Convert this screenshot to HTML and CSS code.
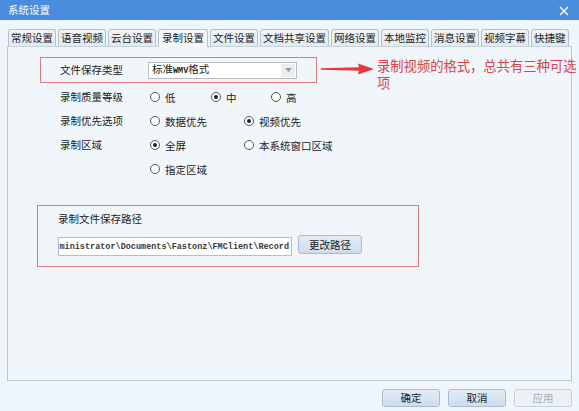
FILE: index.html
```html
<!DOCTYPE html>
<html lang="zh-CN">
<head>
<meta charset="utf-8">
<link rel="stylesheet" href="styles.css">
</head>
<body>
<div class="window">
  <div class="titlebar">
    <span class="title">系统设置</span>
    <svg class="close" width="10" height="10" viewBox="0 0 10 10"><path d="M1 1L9 9M9 1L1 9" stroke="#fff" stroke-width="1.4"/></svg>
  </div>
  <div class="body">
    <div class="tabs">
      <div class="tab">常规设置</div>
      <div class="tab">语音视频</div>
      <div class="tab">云台设置</div>
      <div class="tab active">录制设置</div>
      <div class="tab">文件设置</div>
      <div class="tab">文档共享设置</div>
      <div class="tab">网络设置</div>
      <div class="tab">本地监控</div>
      <div class="tab">消息设置</div>
      <div class="tab">视频字幕</div>
      <div class="tab">快捷键</div>
    </div>
    <div class="panel">
      <div class="hl-box type-box">
        <span class="label">文件保存类型</span>
        <div class="select"><span class="select-text">标准<b class="mono">WMV</b>格式</span><span class="select-arrow"><svg width="7" height="4" viewBox="0 0 7 4"><path d="M0 0H7L3.5 4Z" fill="#999"/></svg></span></div>
      </div>
      <div class="annotation">
        <svg class="arrow" width="53" height="12" viewBox="0 0 53 12"><path d="M0 5.3L38 4.2L37 0.5L53 6L37 11.5L38 7.8L0 6.7Z" fill="#e8383d"/></svg>
        <p class="note">录制视频的格式，总共有三种可选项</p>
      </div>
      <div class="row">
        <span class="label">录制质量等级</span>
        <span class="radio w61"><i class="dot"></i>低</span>
        <span class="radio w60"><i class="dot on"></i>中</span>
        <span class="radio"><i class="dot"></i>高</span>
      </div>
      <div class="row">
        <span class="label">录制优先选项</span>
        <span class="radio w94"><i class="dot"></i>数据优先</span>
        <span class="radio"><i class="dot on"></i>视频优先</span>
      </div>
      <div class="row">
        <span class="label">录制区域</span>
        <span class="radio w94"><i class="dot on"></i>全屏</span>
        <span class="radio"><i class="dot"></i>本系统窗口区域</span>
      </div>
      <div class="row">
        <span class="label"></span>
        <span class="radio"><i class="dot"></i>指定区域</span>
      </div>
      <div class="hl-box path-box">
        <div class="path-label">录制文件保存路径</div>
        <div class="path-row">
          <div class="path-input"><span class="path-text">ministrator\Documents\Fastonz\FMClient\Record</span></div>
          <button class="btn path-btn">更改路径</button>
        </div>
      </div>
    </div>
    <div class="footer">
      <button class="btn">确定</button>
      <button class="btn">取消</button>
      <button class="btn disabled">应用</button>
    </div>
  </div>
</div>
</body>
</html>
```

FILE: styles.css
```css
* { box-sizing: border-box; }
html, body { margin: 0; padding: 0; }
body {
  width: 579px;
  height: 411px;
  overflow: hidden;
  background: #eef5fb;
  font-family: "Noto Sans CJK SC", "Noto Sans", sans-serif;
  font-size: 10.5px;
  color: #222;
}
.window { width: 579px; height: 411px; display: flex; flex-direction: column; }
.titlebar {
  height: 20px;
  background: #4a8ddd;
  display: flex;
  align-items: center;
  justify-content: space-between;
  padding: 0 10px 0 8px;
}
.title { color: #fff; font-size: 10.5px; line-height: 20px; }
.close { display: block; margin-top: 1px; }
.body { padding: 9px 0 0 7px; }
.tabs { display: flex; gap: 2px; padding-left: 1px; height: 17px; }
.tab {
  height: 17px;
  padding: 0 2px;
  border: 1px solid #b3c1cf;
  border-bottom: none;
  border-radius: 3px 3px 0 0;
  background: linear-gradient(#f0f4f8, #e2e9f0);
  line-height: 15px;
  font-size: 10.5px;
  color: #222;
  white-space: nowrap;
}
.tab.active { background: #f4f8fc; padding: 0 3px; height: 18px; position: relative; z-index: 1; }
.panel {
  position: relative;
  width: 565px;
  height: 335px;
  border: 1px solid #b8c7d6;
  border-top-color: #c6d3df;
  background: #f1f6fb;
  padding-top: 10px;
}
.hl-box { border: 1px solid #dc7a7f; }
.type-box {
  margin-left: 32px;
  width: 277px;
  height: 26px;
  display: flex;
  align-items: center;
  padding-left: 19px;
}
.label { display: inline-block; width: 88px; line-height: 24px; }
.select {
  width: 149px;
  height: 17px;
  border: 1px solid #b5bdc6;
  background: #fff;
  display: flex;
  align-items: center;
  justify-content: space-between;
  padding-left: 3px;
}
.select-text { line-height: 15px; }
.mono { font-family: "Liberation Mono", monospace; font-size: 8.5px; font-weight: bold; }
.select-arrow {
  width: 14px;
  height: 13px;
  margin-right: 1px;
  background: #ececec;
  display: flex;
  align-items: center;
  justify-content: center;
}
.select-arrow svg { display: block; }
.annotation {
  position: absolute;
  left: 313px;
  top: 16px;
  display: flex;
  align-items: flex-start;
  width: 260px;
}
.arrow { display: block; flex: none; }
.note {
  margin: -6px 0 0 3px;
  width: 205px;
  color: #d8434a;
  font-size: 13.3px;
  line-height: 17px;
}
.row {
  display: flex;
  align-items: center;
  height: 24px;
  padding-left: 52px;
}
.type-box + .annotation + .row { margin-top: 2px; }
.row .label { width: 90px; }
.radio { display: inline-flex; align-items: center; white-space: nowrap; }
.w61 { width: 61px; }
.w60 { width: 60px; }
.w94 { width: 94px; }
.dot {
  width: 10px;
  height: 10px;
  border: 1px solid #555;
  border-radius: 50%;
  background: #fff;
  margin-right: 5px;
  display: inline-flex;
  align-items: center;
  justify-content: center;
}
.dot.on::after {
  content: "";
  width: 4px;
  height: 4px;
  border-radius: 50%;
  background: #222;
}
.path-box {
  margin: 24px 0 0 29px;
  width: 382px;
  height: 62px;
  padding: 5px 0 0 20px;
}
.path-label { line-height: 16px; }
.path-row { display: flex; align-items: flex-start; gap: 6px; margin-top: 8px; }
.path-input {
  width: 234px;
  height: 19px;
  margin-top: 2px;
  border: 1px solid #b5bdc6;
  background: #fff;
  display: flex;
  justify-content: flex-end;
  align-items: center;
  padding-right: 2px;
}
.path-text {
  font-family: "Liberation Mono", monospace;
  font-size: 8.5px;
  font-weight: bold;
  color: #3a3a3a;
  white-space: nowrap;
}
.btn {
  font-family: "Noto Sans CJK SC", "Noto Sans", sans-serif;
  font-size: 10.5px;
  color: #222;
  height: 18px;
  width: 58px;
  padding: 0;
  border: 1px solid #a9bdd2;
  border-radius: 3px;
  background: linear-gradient(#e3ecf6, #cddcec);
  line-height: 16px;
}
.path-btn { width: 64px; height: 19px; }
.btn.disabled {
  color: #a4abb3;
  border-color: #c8d2dc;
  background: #edf1f5;
}
.footer {
  display: flex;
  justify-content: flex-end;
  gap: 8px;
  width: 565px;
  margin-top: 8px;
}
```
